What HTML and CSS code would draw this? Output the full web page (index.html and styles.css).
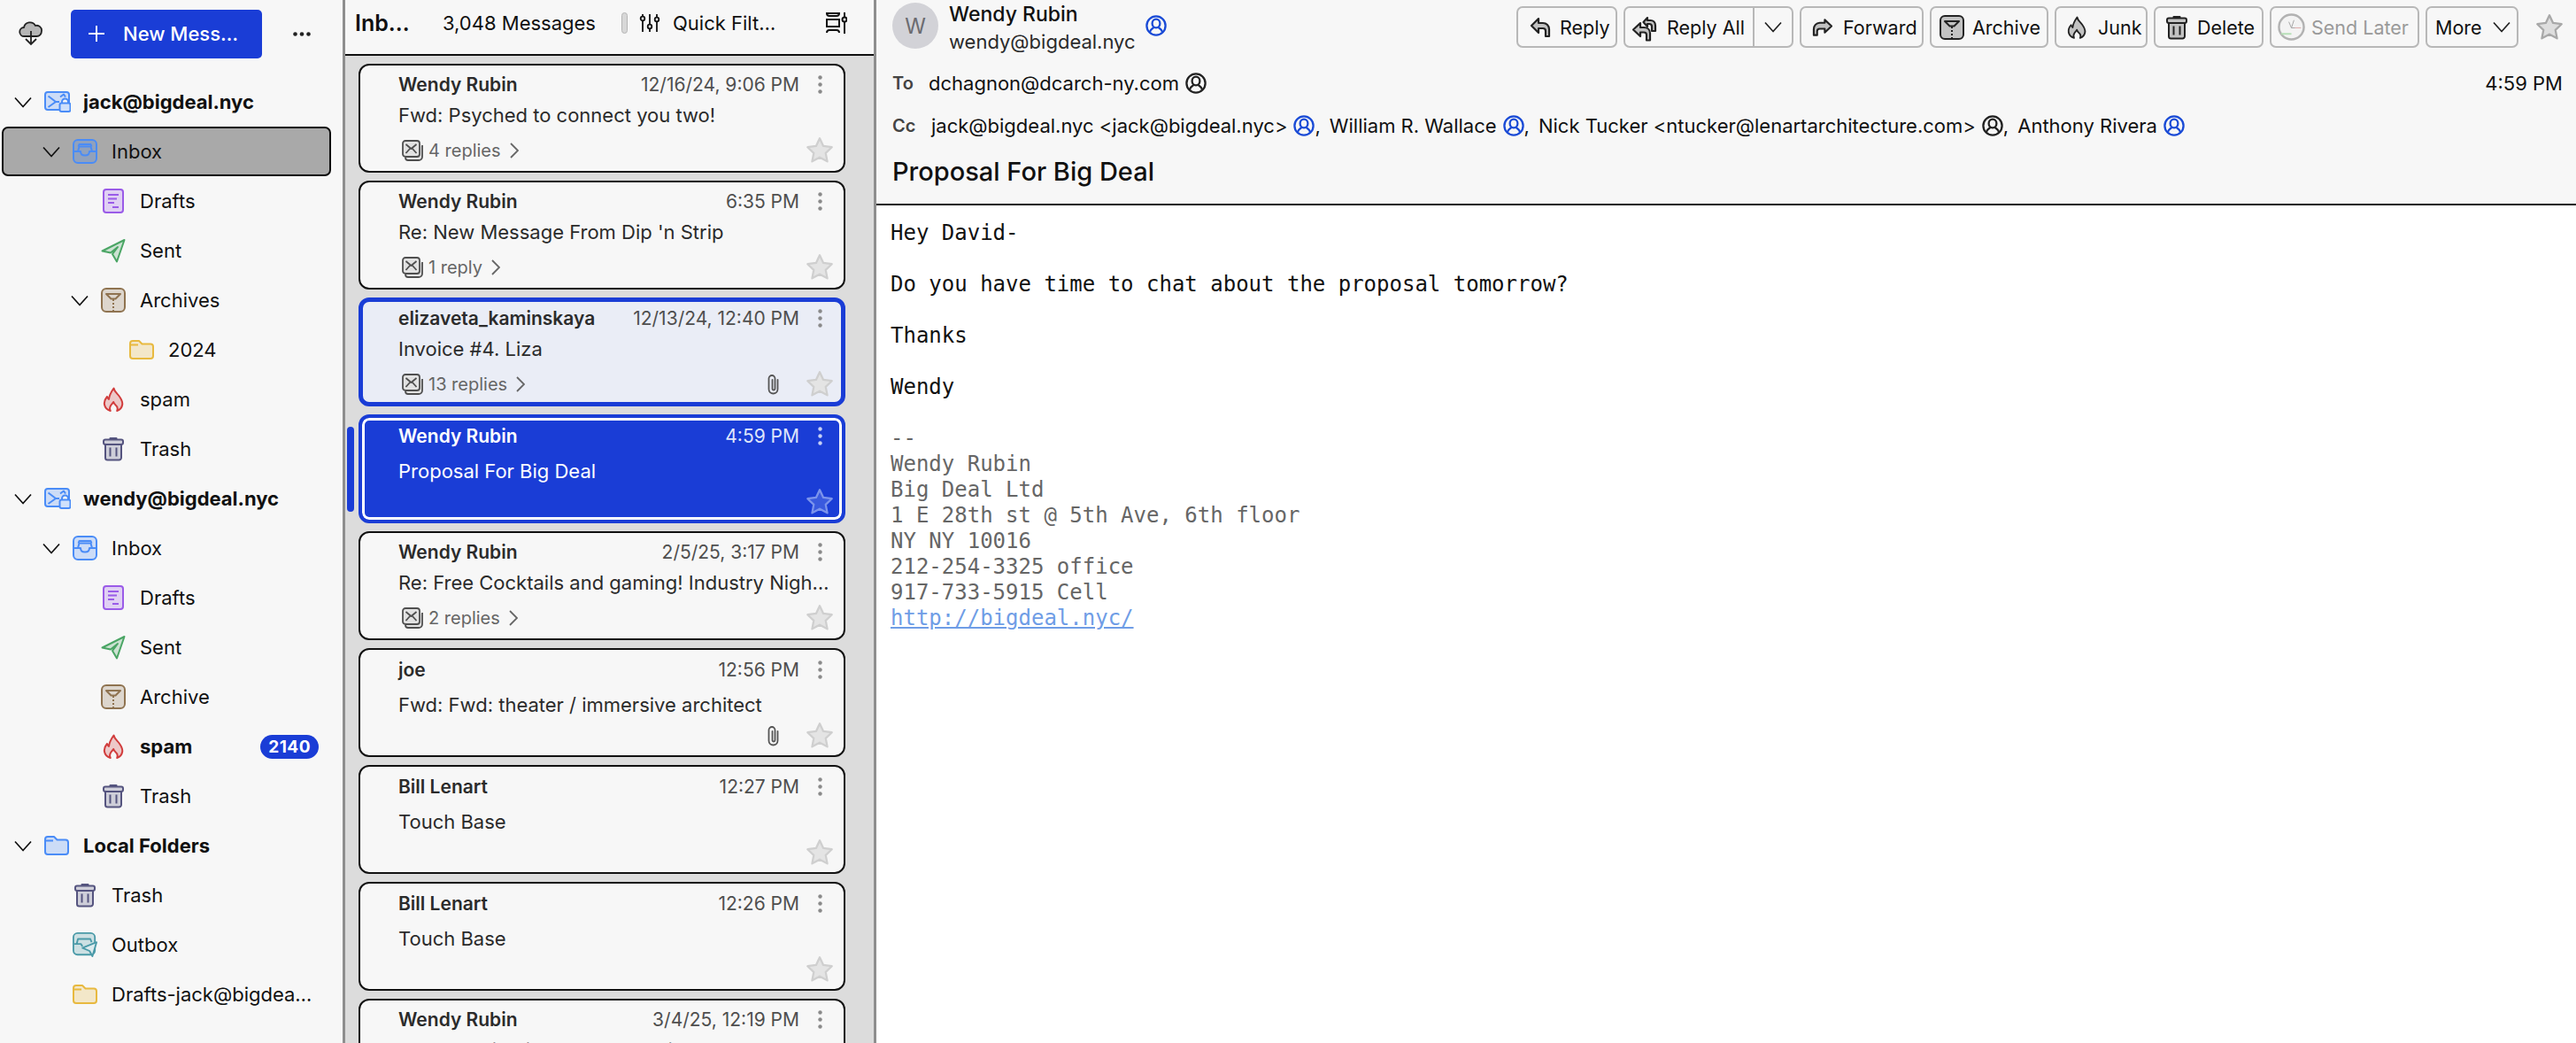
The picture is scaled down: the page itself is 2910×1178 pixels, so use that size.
FILE: index.html
```html
<!DOCTYPE html>
<html lang="en">
<head>
  <meta charset="utf-8">
  <title>Inbox - Proposal For Big Deal</title>
  <link rel="stylesheet" href="styles.css">
</head>
<body>

  <!-- Icon sprite -->
  <svg class="sprite" xmlns="http://www.w3.org/2000/svg">
    <symbol id="i-twisty" viewBox="0 0 20 13"><path d="M1 1.5l9 10 9-10" fill="none" stroke="currentColor" stroke-width="1.7" stroke-linejoin="round"/></symbol>
    <symbol id="i-account" viewBox="0 0 30 24"><g stroke="currentColor" stroke-width="2" stroke-linejoin="round"><rect x="1" y="1" width="27" height="20" rx="3" fill="currentColor" fill-opacity=".25"/><path d="M4.5 5.5l8.5 6.5-8.5 6M13 12h4M18 6.5l4-3 2 3" fill="none"/><path d="M20 14v-2a3.5 3.5 0 0 1 7 0v2" fill="#f7f7f7"/><rect x="17.5" y="13.5" width="12" height="9.5" rx="2" fill="#cfe0fb"/></g></symbol>
    <symbol id="i-inbox" viewBox="0 0 28 28"><g stroke="currentColor" stroke-width="2" stroke-linejoin="round"><rect x="1" y="1" width="26" height="26" rx="5" fill="currentColor" fill-opacity=".25"/><path d="M6 14l1.5-5.5h13L22 14" fill="none"/><path d="M6.5 8.5l1-2.5h13l1 2.500" fill="none"/><path d="M2 14h7c0 3 2 4.5 5 4.5s5-1.5 5-4.5h7" fill="none"/></g></symbol>
    <symbol id="i-drafts" viewBox="0 0 24 28"><g stroke="currentColor" stroke-width="2" stroke-linejoin="round"><rect x="1" y="1" width="22" height="26" rx="3" fill="currentColor" fill-opacity=".25"/><path d="M6 7h12M6 11.5h10M6 16h7M11 21h7" fill="none"/></g></symbol>
    <symbol id="i-sent" viewBox="0 0 28 28"><path d="M1.5 14.500L26.5 2 18 26.5l-5-8.5 6-8-8 6.500z" fill="currentColor" fill-opacity=".25" stroke="currentColor" stroke-width="2" stroke-linejoin="round"/></symbol>
    <symbol id="i-archive" viewBox="0 0 28 28"><g stroke="currentColor" stroke-width="2" stroke-linejoin="round"><rect x="1" y="1" width="26" height="26" rx="5" fill="currentColor" fill-opacity=".25"/><path d="M6 7h16l-5.5 5.5h-5zM14 13v2M14 17v2M14 21v2M14 25v1.5" fill="none"/></g></symbol>
    <symbol id="i-folder" viewBox="0 0 28 22"><g stroke="currentColor" stroke-width="2" stroke-linejoin="round"><path d="M1 4a3 3 0 0 1 3-3h7l3.5 3.5H24a3 3 0 0 1 3 3V18a3 3 0 0 1-3 3H4a3 3 0 0 1-3-3z" fill="currentColor" fill-opacity=".25"/><path d="M1 5.5h9" fill="none"/></g></symbol>
    <symbol id="i-flame" viewBox="0 0 24 28"><path d="M12.5 1.5c.8 4 3.800 5.700 6.200 9 2.500 3.500 4 6.500 3.500 9.500-.6 3.500-3 6-6 7 1-2.500.3-5-1.600-6.500-1.200-1-2-2-2.400-3.500-1 1.500-2 2.500-2.800 3.500-1.400 2-1.800 4.200-.7 6.500-3.500-1-6-3.500-6.700-7-.7-3.700 1-6.700 3-9 .5 1.300 1 2.200 2 3 .4-4.500 2.600-8.500 5.500-12.500z" fill="currentColor" fill-opacity=".25" stroke="currentColor" stroke-width="2" stroke-linejoin="round"/></symbol>
    <symbol id="i-trash" viewBox="0 0 24 28"><g stroke="currentColor" stroke-width="2" stroke-linejoin="round"><path d="M8.5 3.5V2h7v1.5" fill="currentColor"/><rect x="1" y="3.5" width="22" height="5.5" rx="2" fill="currentColor" fill-opacity=".25"/><path d="M3 9v15a2.5 2.5 0 0 0 2.5 2.5h13A2.5 2.5 0 0 0 21 24V9" fill="currentColor" fill-opacity=".25"/><path d="M8.5 12.5v10M15.5 12.5v10" fill="none"/></g></symbol>
    <symbol id="i-outbox" viewBox="0 0 30 30"><g stroke="currentColor" stroke-width="2" stroke-linejoin="round"><rect x="1" y="1" width="26" height="26" rx="5" fill="currentColor" fill-opacity=".25"/><path d="M5 14l1.5-6h15l1.500 4M2 14h8l2 3" fill="none"/><path d="M12 19l17-7-5 17-3.500-6.500z" fill="#dcebee"/></g></symbol>
    <symbol id="i-plus" viewBox="0 0 18 18"><path d="M9 0v18M0 9h18" stroke="currentColor" stroke-width="2"/></symbol>
    <symbol id="i-dots" viewBox="0 0 20 5"><circle cx="2.5" cy="2.5" r="2.3" fill="currentColor"/><circle cx="10" cy="2.5" r="2.3" fill="currentColor"/><circle cx="17.5" cy="2.5" r="2.3" fill="currentColor"/></symbol>
    <symbol id="i-kebab" viewBox="0 0 5 21"><circle cx="2.5" cy="2.5" r="2.2" fill="currentColor"/><circle cx="2.5" cy="10.5" r="2.2" fill="currentColor"/><circle cx="2.5" cy="18.5" r="2.2" fill="currentColor"/></symbol>
    <symbol id="i-cloud" viewBox="0 0 28 28"><path d="M8 17H6.5a5 5 0 0 1-.5-10 7 7 0 0 1 13-2 5.500 5.500 0 0 1 7 6c0 3.500-2.500 6-5.500 6H8z" fill="currentColor" fill-opacity=".3" stroke="currentColor" stroke-width="1.8" stroke-linejoin="round"/><path d="M14 11v15M8 20l6 6 6-6" fill="none" stroke="currentColor" stroke-width="1.8"/></symbol>
    <symbol id="i-sliders" viewBox="0 0 24 22"><g fill="none" stroke="currentColor" stroke-width="1.8"><path d="M4 1v2M4 9v12M12 1v11M12 18v3M20 1v3M20 10v11"/><circle cx="4" cy="6" r="2.3"/><circle cx="12" cy="15" r="2.3"/><circle cx="20" cy="7" r="2.3"/></g></symbol>
    <symbol id="i-layout" viewBox="0 0 24 24"><g fill="none" stroke="currentColor" stroke-width="2"><path d="M1 1c0 2 1 3 3 3h8c2 0 3-1 3-3M1 8h14v8H1zM1 23c0-2 1-3 3-3h8c2 0 3 1 3 3M0 1h16M21 0v5M21 11v13"/><circle cx="21" cy="8" r="2.5"/></g></symbol>
    <symbol id="i-thread" viewBox="0 0 24 24"><g stroke="currentColor" stroke-width="1.8" stroke-linejoin="round"><path d="M23 6v13a4 4 0 0 1-4 4H7a3 3 0 0 1-3-3" fill="#e2e2e2"/><rect x="1" y="1" width="19" height="18" rx="3" fill="#e2e2e2"/><path d="M4.5 5l6 5 6-5M4.5 15L9 10M16.5 15L12 10" fill="none"/></g></symbol>
    <symbol id="i-chevron" viewBox="0 0 10 18"><path d="M1 1l8 8-8 8" fill="none" stroke="currentColor" stroke-width="1.8"/></symbol>
    <symbol id="i-clip" viewBox="0 0 15 24"><path d="M12.5 7v10.5a5 5 0 0 1-10 0V5.500a3.500 3.500 0 0 1 7 0V17a1.500 1.500 0 0 1-3 0V7" fill="none" stroke="currentColor" stroke-width="1.8" stroke-linecap="round"/></symbol>
    <symbol id="i-star" viewBox="0 0 28 28"><path d="M14 2l3.6 7.6 8.4 1.1-6.1 5.800 1.6 8.300L14 20.700l-7.500 4.100 1.600-8.300L2 10.700l8.400-1.100z" stroke-width="2" stroke-linejoin="round"/></symbol>
    <symbol id="i-contact" viewBox="0 0 24 24"><g fill="none" stroke="currentColor" stroke-width="2.3"><circle cx="12" cy="12" r="10.6"/><ellipse cx="12" cy="9.5" rx="4.4" ry="4.8"/><path d="M4.8 19.5c.6-3.500 3-4 4.700-5.500M19.200 19.500c-.6-3.500-3-4-4.700-5.500"/></g></symbol>
    <symbol id="i-reply" viewBox="0 0 24 24"><path d="M10 2L2 10l8 8v-5h5c2 0 3 1 3 3v6h4v-8c0-4-3-7-7-7h-5z" fill="currentColor" fill-opacity=".25" stroke="currentColor" stroke-width="2.2" stroke-linejoin="round"/></symbol>
    <symbol id="i-replyall" viewBox="0 0 30 32"><g fill="currentColor" fill-opacity=".25" stroke="currentColor" stroke-width="2.2" stroke-linejoin="round"><path d="M17 5l-4.500 5 4.500 5v-3h2c2 0 3 1 3 3v5h4v-6c0-4-2.500-6-5.500-6H17z"/><path d="M9 11l-8 7.500 8 7.500v-4.500h4c2 0 3 1 3 3v6h4v-8c0-4-3-6.500-7-6.500H9z"/></g></symbol>
    <symbol id="i-forward" viewBox="0 0 24 20"><path d="M15 1l8 7.500-8 7.500v-4.500h-6c-2 0-3 1-3 3V19H2v-7c0-4 3-7.500 7-7.500h6z" fill="currentColor" fill-opacity=".25" stroke="currentColor" stroke-width="2.2" stroke-linejoin="round"/></symbol>
    <symbol id="i-clock" viewBox="0 0 32 32"><circle cx="16" cy="16" r="14.5" fill="#f2f2f2" stroke="#9b9b9b" stroke-width="2.5"/><path d="M16 17l-3-7M16 17l3-9M16 17h11" fill="none" stroke="#8a8a8a"/><path d="M4 24h12" stroke="#9fd79f" stroke-width="2"/><path d="M20 17h7" stroke="#dd9a9a"/></symbol>
  </svg>

  <div class="app">

    <!-- Folder pane -->
    <aside class="folder-pane">
      <div class="folder-top">
        <svg class="get-mail"><use href="#i-cloud"/></svg>
        <button class="new-msg"><svg class="new-msg-plus"><use href="#i-plus"/></svg><span>New Mess…</span></button>
        <svg class="more-dots"><use href="#i-dots"/></svg>
      </div>

      <ul class="tree">
        <li class="row account"><svg class="twisty"><use href="#i-twisty"/></svg><svg class="ic ic-account blue"><use href="#i-account"/></svg><span class="row-name">jack@bigdeal.nyc</span></li>
        <li class="row level-1 current"><svg class="twisty"><use href="#i-twisty"/></svg><svg class="ic blue"><use href="#i-inbox"/></svg><span class="row-name">Inbox</span></li>
        <li class="row level-2"><span class="twisty"></span><svg class="ic purple"><use href="#i-drafts"/></svg><span class="row-name">Drafts</span></li>
        <li class="row level-2"><span class="twisty"></span><svg class="ic green"><use href="#i-sent"/></svg><span class="row-name">Sent</span></li>
        <li class="row level-2"><svg class="twisty"><use href="#i-twisty"/></svg><svg class="ic brown"><use href="#i-archive"/></svg><span class="row-name">Archives</span></li>
        <li class="row level-3"><span class="twisty"></span><svg class="ic yellow"><use href="#i-folder"/></svg><span class="row-name">2024</span></li>
        <li class="row level-2"><span class="twisty"></span><svg class="ic red"><use href="#i-flame"/></svg><span class="row-name">spam</span></li>
        <li class="row level-2"><span class="twisty"></span><svg class="ic slate"><use href="#i-trash"/></svg><span class="row-name">Trash</span></li>

        <li class="row account"><svg class="twisty"><use href="#i-twisty"/></svg><svg class="ic ic-account blue"><use href="#i-account"/></svg><span class="row-name">wendy@bigdeal.nyc</span></li>
        <li class="row level-1"><svg class="twisty"><use href="#i-twisty"/></svg><svg class="ic blue"><use href="#i-inbox"/></svg><span class="row-name">Inbox</span></li>
        <li class="row level-2"><span class="twisty"></span><svg class="ic purple"><use href="#i-drafts"/></svg><span class="row-name">Drafts</span></li>
        <li class="row level-2"><span class="twisty"></span><svg class="ic green"><use href="#i-sent"/></svg><span class="row-name">Sent</span></li>
        <li class="row level-2"><span class="twisty"></span><svg class="ic brown"><use href="#i-archive"/></svg><span class="row-name">Archive</span></li>
        <li class="row level-2 unread"><span class="twisty"></span><svg class="ic red"><use href="#i-flame"/></svg><span class="row-name">spam</span><span class="badge">2140</span></li>
        <li class="row level-2"><span class="twisty"></span><svg class="ic slate"><use href="#i-trash"/></svg><span class="row-name">Trash</span></li>

        <li class="row account"><svg class="twisty"><use href="#i-twisty"/></svg><svg class="ic blue ic-local"><use href="#i-folder"/></svg><span class="row-name">Local Folders</span></li>
        <li class="row level-1"><span class="twisty"></span><svg class="ic slate"><use href="#i-trash"/></svg><span class="row-name">Trash</span></li>
        <li class="row level-1"><span class="twisty"></span><svg class="ic teal"><use href="#i-outbox"/></svg><span class="row-name">Outbox</span></li>
        <li class="row level-1"><span class="twisty"></span><svg class="ic yellow"><use href="#i-folder"/></svg><span class="row-name">Drafts-jack@bigdeal.nyc</span></li>
      </ul>
    </aside>

    <!-- Thread list -->
    <section class="thread-pane">
      <header class="thread-head">
        <span class="thread-title">Inb…</span>
        <span class="thread-count">3,048 Messages</span>
        <span class="toggle-pill"></span>
        <svg class="sliders"><use href="#i-sliders"/></svg>
        <span class="quick-filter">Quick Filt…</span>
        <svg class="layout"><use href="#i-layout"/></svg>
      </header>

      <div class="thread-list">
        <div class="scroll-thumb"></div>

        <article class="card">
          <div class="card-top"><span class="sender">Wendy Rubin</span><span class="date">12/16/24, 9:06 PM</span><span class="kebab"><svg><use href="#i-kebab"/></svg></span></div>
          <div class="subject">Fwd: Psyched to connect you two!</div>
          <div class="card-foot">
            <svg class="thread-ic"><use href="#i-thread"/></svg><span class="replies">4 replies</span><svg class="chev"><use href="#i-chevron"/></svg>
            <svg class="star"><use href="#i-star"/></svg>
          </div>
        </article>

        <article class="card">
          <div class="card-top"><span class="sender">Wendy Rubin</span><span class="date">6:35 PM</span><span class="kebab"><svg><use href="#i-kebab"/></svg></span></div>
          <div class="subject">Re: New Message From Dip 'n Strip</div>
          <div class="card-foot">
            <svg class="thread-ic"><use href="#i-thread"/></svg><span class="replies">1 reply</span><svg class="chev"><use href="#i-chevron"/></svg>
            <svg class="star"><use href="#i-star"/></svg>
          </div>
        </article>

        <article class="card selected">
          <div class="card-top"><span class="sender">elizaveta_kaminskaya</span><span class="date">12/13/24, 12:40 PM</span><span class="kebab"><svg><use href="#i-kebab"/></svg></span></div>
          <div class="subject">Invoice #4. Liza</div>
          <div class="card-foot">
            <svg class="thread-ic"><use href="#i-thread"/></svg><span class="replies">13 replies</span><svg class="chev"><use href="#i-chevron"/></svg>
            <svg class="clip"><use href="#i-clip"/></svg>
            <svg class="star"><use href="#i-star"/></svg>
          </div>
        </article>

        <article class="card single active">
          <div class="card-top"><span class="sender">Wendy Rubin</span><span class="date">4:59 PM</span><span class="kebab"><svg><use href="#i-kebab"/></svg></span></div>
          <div class="subject">Proposal For Big Deal</div>
          <div class="card-foot">
            <svg class="star"><use href="#i-star"/></svg>
          </div>
        </article>

        <article class="card">
          <div class="card-top"><span class="sender">Wendy Rubin</span><span class="date">2/5/25, 3:17 PM</span><span class="kebab"><svg><use href="#i-kebab"/></svg></span></div>
          <div class="subject">Re: Free Cocktails and gaming! Industry Nigh…</div>
          <div class="card-foot">
            <svg class="thread-ic"><use href="#i-thread"/></svg><span class="replies">2 replies</span><svg class="chev"><use href="#i-chevron"/></svg>
            <svg class="star"><use href="#i-star"/></svg>
          </div>
        </article>

        <article class="card single">
          <div class="card-top"><span class="sender">joe</span><span class="date">12:56 PM</span><span class="kebab"><svg><use href="#i-kebab"/></svg></span></div>
          <div class="subject">Fwd: Fwd: theater / immersive architect</div>
          <div class="card-foot">
            <svg class="clip"><use href="#i-clip"/></svg>
            <svg class="star"><use href="#i-star"/></svg>
          </div>
        </article>

        <article class="card single">
          <div class="card-top"><span class="sender">Bill Lenart</span><span class="date">12:27 PM</span><span class="kebab"><svg><use href="#i-kebab"/></svg></span></div>
          <div class="subject">Touch Base</div>
          <div class="card-foot">
            <svg class="star"><use href="#i-star"/></svg>
          </div>
        </article>

        <article class="card single">
          <div class="card-top"><span class="sender">Bill Lenart</span><span class="date">12:26 PM</span><span class="kebab"><svg><use href="#i-kebab"/></svg></span></div>
          <div class="subject">Touch Base</div>
          <div class="card-foot">
            <svg class="star"><use href="#i-star"/></svg>
          </div>
        </article>

        <article class="card">
          <div class="card-top"><span class="sender">Wendy Rubin</span><span class="date">3/4/25, 12:19 PM</span><span class="kebab"><svg><use href="#i-kebab"/></svg></span></div>
          <div class="subject">Re: Checking in about the holidays</div>
        </article>
      </div>
    </section>

    <!-- Message pane -->
    <main class="message-pane">
      <header class="msg-head">
        <div class="msg-top">
          <div class="avatar">W</div>
          <div class="from">
            <div class="from-name">Wendy Rubin</div>
            <div class="from-mail">wendy@bigdeal.nyc</div>
          </div>
          <svg class="contact known from-contact"><use href="#i-contact"/></svg>

          <div class="toolbar">
            <button class="btn btn-reply"><svg class="btn-ic ic-reply"><use href="#i-reply"/></svg>Reply</button>
            <div class="btn btn-split">
              <svg class="btn-ic ic-replyall"><use href="#i-replyall"/></svg><span class="split-label">Reply All</span>
              <span class="split-arrow"><svg class="btn-chev"><use href="#i-twisty"/></svg></span>
            </div>
            <button class="btn btn-forward"><svg class="btn-ic ic-forward"><use href="#i-forward"/></svg>Forward</button>
            <button class="btn btn-archive"><svg class="btn-ic ic-archive"><use href="#i-archive"/></svg>Archive</button>
            <button class="btn btn-junk"><svg class="btn-ic ic-junk"><use href="#i-flame"/></svg>Junk</button>
            <button class="btn btn-delete"><svg class="btn-ic ic-delete"><use href="#i-trash"/></svg>Delete</button>
            <button class="btn btn-later"><svg class="btn-ic ic-clock"><use href="#i-clock"/></svg>Send Later</button>
            <button class="btn btn-more">More<svg class="btn-chev"><use href="#i-twisty"/></svg></button>
            <svg class="head-star"><use href="#i-star"/></svg>
          </div>
        </div>

        <div class="addr-row">
          <span class="addr-label to-label">To</span>
          <span>dchagnon@dcarch-ny.com</span><svg class="contact"><use href="#i-contact"/></svg>
          <span class="msg-time">4:59 PM</span>
        </div>

        <div class="addr-row">
          <span class="addr-label cc-label">Cc</span>
          <span>jack@bigdeal.nyc &lt;jack@bigdeal.nyc&gt;</span><svg class="contact known"><use href="#i-contact"/></svg><span class="comma">,</span>
          <span>William R. Wallace</span><svg class="contact known"><use href="#i-contact"/></svg><span class="comma">,</span>
          <span>Nick Tucker &lt;ntucker@lenartarchitecture.com&gt;</span><svg class="contact"><use href="#i-contact"/></svg><span class="comma">,</span>
          <span>Anthony Rivera</span><svg class="contact known"><use href="#i-contact"/></svg>
        </div>

        <h1 class="msg-subject">Proposal For Big Deal</h1>
      </header>

      <div class="msg-body">
<pre class="msg-text">Hey David-

Do you have time to chat about the proposal tomorrow?

Thanks

Wendy

</pre>
<pre class="msg-sig">--
Wendy Rubin
Big Deal Ltd
1 E 28th st @ 5th Ave, 6th floor
NY NY 10016
212-254-3325 office
917-733-5915 Cell
<a href="#">http://bigdeal.nyc/</a></pre>
      </div>
    </main>

  </div>

</body>
</html>
```

FILE: styles.css
```css
* {
  box-sizing: border-box;
  margin: 0;
  padding: 0;
}

html,
body {
  height: 100%;
  overflow: hidden;
}

body {
  font-family: "Inter", "Liberation Sans", sans-serif;
  font-size: 22px;
  color: #111;
  background: #f7f7f7;
}

svg {
  display: block;
  flex-shrink: 0;
}

.sprite {
  display: none;
}

.app {
  display: flex;
  height: 100vh;
}

/* Folder pane */
.folder-pane {
  width: 390px;
  flex-shrink: 0;
  background: #f7f7f7;
  border-right: 3px solid #8e8e8e;
}

.folder-top {
  display: flex;
  align-items: center;
  height: 76px;
  padding-left: 21px;
}

.get-mail {
  width: 28px;
  height: 28px;
  color: #222;
}

.new-msg {
  display: flex;
  align-items: center;
  gap: 21px;
  width: 216px;
  height: 55px;
  margin-left: 31px;
  padding-left: 20px;
  border: none;
  border-radius: 5px;
  background: #1a3dd6;
  color: white;
  font-family: inherit;
  font-size: 22px;
  font-weight: 500;
}

.new-msg-plus {
  width: 18px;
  height: 18px;
}

.more-dots {
  width: 20px;
  height: 5px;
  margin-left: 35px;
  color: #222;
}

.tree {
  list-style: none;
  margin-top: 11px;
}

.row {
  display: flex;
  align-items: center;
  width: 372px;
  height: 56px;
  margin-left: 2px;
  padding-left: 12px;
  padding-right: 18px;
  border: 2px solid transparent;
  border-radius: 7px;
  white-space: nowrap;
}

.level-1 { padding-left: 44px; }
.level-2 { padding-left: 76px; }
.level-3 { padding-left: 108px; }

.current {
  background: #a9a9a9;
  border-color: #0b0b0b;
}

.account .row-name,
.unread .row-name {
  font-weight: 700;
}

.twisty {
  display: block;
  width: 20px;
  height: 13px;
  flex-shrink: 0;
  color: #111;
}

.ic {
  width: 28px;
  height: 28px;
  margin-left: 14px;
}

.ic-account {
  width: 30px;
  height: 24px;
}

.row-name {
  margin-left: 16px;
  overflow: hidden;
  text-overflow: ellipsis;
}

.ic-account + .row-name {
  margin-left: 14px;
}

.blue { color: #4a8cf7; }
.purple { color: #9a5be8; }
.green { color: #4aa564; }
.brown { color: #8f7350; }
.yellow { color: #e8b93f; }
.red { color: #d13c3c; }
.slate { color: #55547f; }
.teal { color: #4a9aa8; }

.badge {
  margin-left: auto;
  margin-right: -6px;
  padding: 0 9px;
  height: 27px;
  line-height: 27px;
  border-radius: 14px;
  background: #1a3dd6;
  color: white;
  font-size: 19px;
  font-weight: 700;
  letter-spacing: 0.5px;
}

/* Thread pane */
.thread-pane {
  width: 600px;
  flex-shrink: 0;
  display: flex;
  flex-direction: column;
  border-right: 3px solid #8e8e8e;
  background: #dcdcdc;
}

.thread-head {
  display: flex;
  align-items: center;
  flex-shrink: 0;
  height: 63px;
  padding: 0 0 9px 11px;
  background: #f7f7f7;
  border-bottom: 2px solid #111;
  white-space: nowrap;
}

.thread-title {
  width: 99px;
  font-size: 25px;
  font-weight: 600;
}

.thread-count {
  width: 202px;
}

.toggle-pill {
  width: 7px;
  height: 24px;
  border: 1.5px solid #b5b5b5;
  border-radius: 4px;
  background: #d8d8d8;
}

.sliders {
  width: 24px;
  height: 22px;
  margin-left: 13px;
}

.quick-filter {
  width: 173px;
  margin-left: 14px;
}

.layout {
  width: 24px;
  height: 24px;
}

.thread-list {
  position: relative;
  flex: 1;
  display: flex;
  flex-direction: column;
  gap: 9px;
  padding: 9px 32px 0 15px;
  overflow: hidden;
}

.scroll-thumb {
  position: absolute;
  left: 2px;
  top: 419px;
  width: 8px;
  height: 96px;
  border-radius: 4px;
  background: #1a3dd6;
}

.card {
  flex-shrink: 0;
  display: flex;
  flex-direction: column;
  height: 123px;
  padding: 8px 15px 8px 43px;
  border: 2px solid #111;
  border-radius: 12px;
  background: #f7f7f7;
  color: #2b2b2b;
}

.card-top {
  display: flex;
  align-items: center;
  height: 26px;
  font-size: 21px;
}

.sender {
  font-weight: 600;
}

.date {
  margin-left: auto;
  margin-right: 11px;
  color: #4f4f4f;
}

.kebab {
  display: flex;
  justify-content: center;
  width: 24px;
  color: #8a8a8a;
}

.kebab svg {
  width: 5px;
  height: 21px;
}

.subject {
  height: 26px;
  margin-top: 9px;
  line-height: 26px;
  white-space: nowrap;
  overflow: hidden;
  text-overflow: ellipsis;
}

.single {
  padding-top: 9px;
  padding-bottom: 7px;
}

.single .subject {
  margin-top: 14px;
}

.card-foot {
  display: flex;
  align-items: center;
  margin-top: auto;
  height: 30px;
}

.thread-ic {
  width: 24px;
  height: 24px;
  margin-left: 4px;
  color: #4f4f4f;
}

.replies {
  margin-left: 6px;
  color: #666;
  font-size: 20px;
}

.chev {
  width: 10px;
  height: 18px;
  margin-left: 10px;
  color: #666;
}

.clip {
  width: 15px;
  height: 24px;
  margin-left: auto;
  color: #555;
}

.star {
  width: 32px;
  height: 32px;
  margin-left: auto;
  margin-right: -4px;
  fill: #e4e4e4;
  stroke: #cfcfcf;
}

.clip + .star {
  margin-left: 29px;
}

.selected {
  border: 5px solid #1a3dd6;
  padding: 5px 12px 5px 40px;
  background: #eaedf6;
}

.active {
  border: 4px solid #1a3dd6;
  padding: 7px 13px 5px 41px;
  box-shadow: inset 0 0 0 3px white;
  background: #1a3dd6;
  color: white;
}

.active .date {
  color: #dfe5fb;
}

.active .kebab {
  color: #c7d1f5;
}

.active .star {
  fill: #3a5ade;
  stroke: #7c94ec;
}

/* Message pane */
.message-pane {
  flex: 1;
  min-width: 0;
  display: flex;
  flex-direction: column;
  background: white;
}

.msg-head {
  flex-shrink: 0;
  height: 232px;
  padding: 0 16px 0 18px;
  background: #f7f7f7;
  border-bottom: 2px solid #111;
}

.msg-top {
  display: flex;
  align-items: flex-start;
  height: 70px;
}

.avatar {
  display: flex;
  align-items: center;
  justify-content: center;
  width: 52px;
  height: 52px;
  margin-top: 3px;
  border-radius: 50%;
  background: #d2d2d7;
  color: #6b6b70;
  font-size: 24px;
}

.from {
  margin-left: 12px;
}

.from-name {
  height: 32px;
  line-height: 32px;
  font-size: 23px;
  font-weight: 500;
}

.from-mail {
  height: 30px;
  line-height: 30px;
  color: #2b2b2b;
}

.contact {
  width: 24px;
  height: 24px;
  margin-left: 7px;
  color: #222;
}

.known {
  color: #1a4bd6;
}

.from-contact {
  margin-top: 17px;
  margin-left: 11px;
}

.toolbar {
  display: flex;
  gap: 7px;
  align-items: center;
  margin-top: 7px;
  margin-left: auto;
}

.btn {
  display: flex;
  align-items: center;
  height: 47px;
  border: 2px solid #b8b8b8;
  border-radius: 7px;
  background: #f7f7f7;
  color: #111;
  font-family: inherit;
  font-size: 21.5px;
  white-space: nowrap;
}

.btn-ic {
  height: 28px;
  color: #222;
}

.btn-chev {
  width: 20px;
  height: 13px;
  color: #222;
}

.btn-reply { width: 114px; padding-left: 13px; }
.ic-reply { width: 24px; height: 24px; margin-right: 10px; }

.btn-split { width: 192px; padding-left: 8px; }
.ic-replyall { width: 30px; height: 32px; margin-right: 9px; }
.split-label { width: 97px; }
.split-arrow {
  display: flex;
  align-items: center;
  justify-content: center;
  flex: 1;
  height: 100%;
  border-left: 2px solid #b8b8b8;
}

.btn-forward { width: 140px; padding-left: 12px; }
.ic-forward { width: 23px; height: 20px; margin-right: 12px; }

.btn-archive { width: 134px; padding-left: 9px; }
.ic-archive { width: 28px; margin-right: 9px; }

.btn-junk { width: 105px; padding-left: 12px; }
.ic-junk { width: 22px; margin-right: 13px; }

.btn-delete { width: 124px; padding-left: 12px; }
.ic-delete { width: 24px; margin-right: 11px; }

.btn-later { width: 169px; padding-left: 7px; color: #9a9a9a; }
.ic-clock { width: 31px; height: 31px; margin-right: 7px; opacity: 0.75; }

.btn-more { width: 105px; padding-left: 9px; gap: 12px; }

.head-star {
  width: 32px;
  height: 32px;
  margin-left: 12px;
  margin-right: -2px;
  fill: #dedede;
  stroke: #a8a8a8;
}

.addr-row {
  display: flex;
  align-items: center;
  height: 48px;
  white-space: nowrap;
}

.addr-label {
  color: #444;
  font-size: 20px;
  font-weight: 600;
}

.to-label { width: 41px; }
.cc-label { width: 44px; }

.comma {
  margin-right: 10px;
}

.msg-time {
  margin-left: auto;
  margin-right: -1px;
}

.msg-subject {
  display: flex;
  align-items: center;
  height: 54px;
  font-size: 29px;
  font-weight: 500;
}

.msg-body {
  flex: 1;
  padding: 17px 0 0 16px;
}

.msg-text,
.msg-sig {
  font-family: "DejaVu Sans Mono", "Liberation Mono", monospace;
  font-size: 24px;
  line-height: 29px;
}

.msg-sig {
  color: #666;
}

.msg-sig a {
  color: #6f9de6;
}
```
